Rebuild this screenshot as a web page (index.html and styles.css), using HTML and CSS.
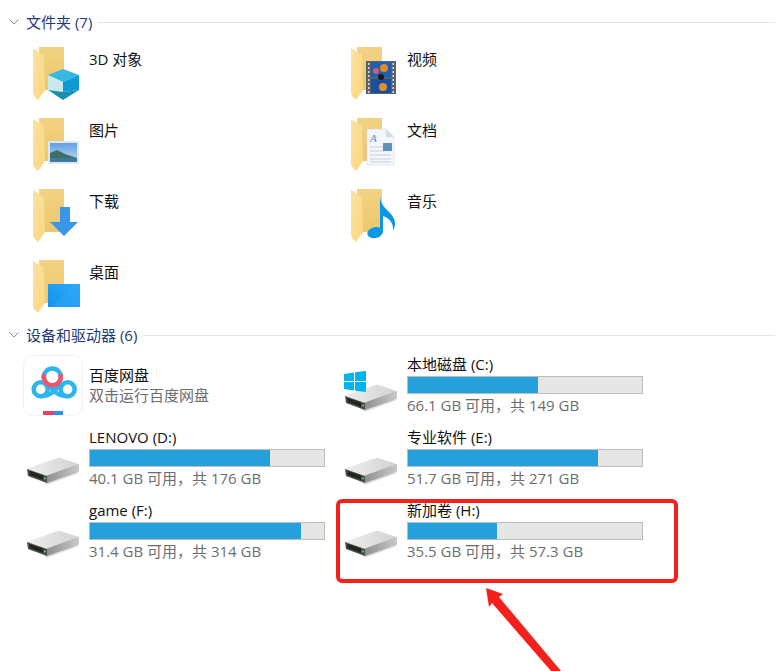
FILE: index.html
```html
<!DOCTYPE html>
<html lang="zh-CN">
<head>
<meta charset="utf-8">
<title>此电脑</title>
<link rel="stylesheet" href="styles.css">
</head>
<body>
<svg class="defs" width="0" height="0" aria-hidden="true">
  <defs>
    <linearGradient id="fb" x1="0" y1="0" x2="0" y2="1"><stop offset="0" stop-color="#f2d283"/><stop offset="1" stop-color="#ebc76c"/></linearGradient>
    <linearGradient id="ff" x1="0" y1="0" x2="1" y2="1"><stop offset="0" stop-color="#fce2a0"/><stop offset="1" stop-color="#fad680"/></linearGradient>
    <linearGradient id="dt" x1="0" y1="0" x2="1" y2="0"><stop offset="0" stop-color="#eeeeee"/><stop offset="1" stop-color="#d2d2d2"/></linearGradient>
    <linearGradient id="ds" x1="0" y1="0" x2="1" y2="0"><stop offset="0" stop-color="#8f8f8f"/><stop offset="1" stop-color="#c8c8c8"/></linearGradient>
    <linearGradient id="sky" x1="0" y1="0" x2="0" y2="1"><stop offset="0" stop-color="#5f9fe6"/><stop offset="1" stop-color="#c5dcec"/></linearGradient>
    <linearGradient id="desk" x1="0" y1="1" x2="1" y2="0"><stop offset="0" stop-color="#1592ec"/><stop offset="1" stop-color="#2aa8f8"/></linearGradient>
    <symbol id="folder" viewBox="0 0 48 56">
      <polygon points="6,1 31,1 31,44 8,44" fill="url(#fb)"/>
      <polygon points="0,2 11,9 12,44 5,54 1,50 0,47" fill="url(#ff)"/>
    </symbol>
    <symbol id="drive" viewBox="0 0 66 66">
      <polygon points="6,44 24,58 56,46 50,44" fill="#000" opacity=".12"/>
      <polygon points="4.500,42 36,31 55.500,37.500 24,49" fill="url(#dt)" stroke="url(#dt)" stroke-linejoin="round"/>
      <polygon points="24,49 55.500,37.500 55.500,44.500 24,55.500" fill="url(#ds)" stroke="url(#ds)" stroke-linejoin="round"/>
      <polygon points="4,42 24,49 24,56 5,49" fill="#4a4c4a"/>
      <polygon points="6.500,44 20,48.500 20,53 6.500,48" fill="#232523"/>
      <circle cx="22" cy="51.500" r="1.100" fill="#4fd072"/>
    </symbol>
  </defs>
</svg>

<section class="group">
  <header class="group-head">
    <svg class="chevron" width="10" height="6" viewBox="0 0 10 6"><path d="M0.5 0.5 5 5 9.5 0.5" fill="none" stroke="#8a8a8a"/></svg>
    <h2 class="group-title">文件夹 (7)</h2>
    <span class="group-rule"></span>
  </header>
  <div class="folders">
    <div class="tile">
      <svg class="folder-icon" viewBox="0 0 48 56">
        <use href="#folder" width="48" height="56"/>
        <polygon points="30,23 46,29 30,36 15,29" fill="#35b8e2"/>
        <polygon points="15,29 30,36 30,46 15,44" fill="#c7e9ee"/>
        <polygon points="30,36 46,29 46,44 30,46" fill="#0e9ad4"/>
        <polygon points="15,44 30,46 46,44 30,54" fill="#1a8fae"/>
      </svg>
      <span class="tile-name">3D 对象</span>
    </div>
    <div class="tile">
      <svg class="folder-icon" viewBox="0 0 48 56">
        <use href="#folder" width="48" height="56"/>
        <rect x="15" y="15" width="30" height="33" fill="#59626b"/>
        <rect x="20" y="16" width="20" height="15" fill="#1d5fb0"/>
        <rect x="20" y="33" width="20" height="14" fill="#1b4f9e"/>
        <circle cx="33" cy="22" r="4" fill="#e08a2c"/>
        <circle cx="25" cy="25" r="3" fill="#d85a7a"/>
        <circle cx="32" cy="41" r="4" fill="#e0902a"/>
        <circle cx="30" cy="31" r="3" fill="#1a1a1a"/>
        <path d="M17 18h1.500M17 22h1.500M17 26h1.500M17 30h1.500M17 34h1.500M17 38h1.500M17 42h1.500M17 46h1.500M41.500 18H43M41.500 22H43M41.500 26H43M41.500 30H43M41.500 34H43M41.500 38H43M41.500 42H43M41.500 46H43" stroke="#d8dde2" stroke-width="2"/>
      </svg>
      <span class="tile-name">视频</span>
    </div>
    <div class="tile">
      <svg class="folder-icon" viewBox="0 0 48 56">
        <use href="#folder" width="48" height="56"/>
        <rect x="15" y="24" width="31" height="23" fill="#dfe8f0"/>
        <rect x="17" y="26" width="27" height="19" fill="url(#sky)"/>
        <path d="M17 36 24 33 32 37 44 41V45H17Z" fill="#3f6f5f"/>
        <rect x="17" y="41" width="27" height="4" fill="#3f78a0"/>
      </svg>
      <span class="tile-name">图片</span>
    </div>
    <div class="tile">
      <svg class="folder-icon" viewBox="0 0 48 56">
        <use href="#folder" width="48" height="56"/>
        <polygon points="16,12 35,12 43,20 43,48 16,48" fill="#f4f6f9" stroke="#d4d9df" stroke-width=".6"/>
        <polygon points="35,12 43,20 35,20" fill="#d5dce4"/>
        <path d="M19 30H34M19 34H34M19 38H40M19 42H40M19 45H40" stroke="#c3d2e2"/>
        <rect x="32" y="26" width="9" height="8" fill="#5f93bb"/>
        <text class="doc-a" x="19" y="25">A</text>
      </svg>
      <span class="tile-name">文档</span>
    </div>
    <div class="tile">
      <svg class="folder-icon" viewBox="0 0 48 56">
        <use href="#folder" width="48" height="56"/>
        <polygon points="27,19 37,19 37,34 45,34 31,48 17,34 27,34" fill="#3a96e8"/>
      </svg>
      <span class="tile-name">下载</span>
    </div>
    <div class="tile">
      <svg class="folder-icon" viewBox="0 0 48 56">
        <use href="#folder" width="48" height="56"/>
        <path d="M29 9C30 16 33 19 38 24 44 30 46 35 42 43 43 35 38 30 32 28V44C31 48 26 51 21 50 16 49 15 45 18 42 21 39 26 38 29 40Z" fill="#0a97e8"/>
      </svg>
      <span class="tile-name">音乐</span>
    </div>
    <div class="tile">
      <svg class="folder-icon" viewBox="0 0 48 56">
        <use href="#folder" width="48" height="56"/>
        <rect x="15" y="25" width="32" height="23" fill="url(#desk)"/>
        <polygon points="19,48 40,25 47,25 47,48" fill="#2fa6f5" opacity=".55"/>
      </svg>
      <span class="tile-name">桌面</span>
    </div>
  </div>
</section>

<section class="group">
  <header class="group-head">
    <svg class="chevron" width="10" height="6" viewBox="0 0 10 6"><path d="M0.5 0.5 5 5 9.5 0.5" fill="none" stroke="#8a8a8a"/></svg>
    <h2 class="group-title">设备和驱动器 (6)</h2>
    <span class="group-rule"></span>
  </header>
  <div class="drives">
    <div class="tile">
      <svg class="drive-icon" viewBox="0 0 66 66">
        <rect x="0.500" y="1.500" width="59" height="59.500" rx="9" fill="#fff" stroke="#f0f0f0"/>
        <path d="M17.700 42.300C24 42.300 27 41 31 37 34.500 33.500 36 32 37.500 29.500" fill="none" stroke="#2cb5ee" stroke-width="4.500"/>
        <path d="M44.700 42.300C38.500 42.300 35 41 31 37 27.500 33.500 26 32 23 29" fill="none" stroke="#2cb5ee" stroke-width="4.500"/>
        <circle cx="17.700" cy="35.300" r="7" fill="none" stroke="#2cb5ee" stroke-width="4.500"/>
        <circle cx="44.700" cy="35.300" r="7" fill="none" stroke="#2cb5ee" stroke-width="4.500"/>
        <circle cx="29.300" cy="23" r="8.500" fill="none" stroke="#2cb5ee" stroke-width="4.500"/>
        <path d="M21.300 20A8.500 8.500 0 1 0 37.300 20" fill="none" stroke="#ee5570" stroke-width="4.500"/>
        <rect x="20" y="57" width="11" height="4" fill="#ee3f62"/>
        <rect x="31" y="57" width="9" height="4" fill="#2f8fee"/>
      </svg>
      <div class="tile-text app-text">
        <span class="tile-name">百度网盘</span>
        <span class="tile-note">双击运行百度网盘</span>
      </div>
    </div>
    <div class="tile">
      <svg class="drive-icon" viewBox="0 0 66 66">
        <use href="#drive" width="66" height="66"/>
        <polygon points="3,20 13,18.500 13,27 3,27" fill="#00b4ee"/>
        <polygon points="14,18.300 25,17 25,27 14,27" fill="#00b4ee"/>
        <polygon points="3,28 13,28 13,36.500 3,35" fill="#00b4ee"/>
        <polygon points="14,28 25,28 25,38 14,36.700" fill="#00b4ee"/>
      </svg>
      <div class="tile-text">
        <span class="tile-name">本地磁盘 (C:)</span>
        <div class="bar"><div class="bar-fill" style="width:55.6%"></div></div>
        <span class="tile-note">66.1 GB 可用，共 149 GB</span>
      </div>
    </div>
    <div class="tile">
      <svg class="drive-icon" viewBox="0 0 66 66"><use href="#drive" width="66" height="66"/></svg>
      <div class="tile-text">
        <span class="tile-name">LENOVO (D:)</span>
        <div class="bar"><div class="bar-fill" style="width:77%"></div></div>
        <span class="tile-note">40.1 GB 可用，共 176 GB</span>
      </div>
    </div>
    <div class="tile">
      <svg class="drive-icon" viewBox="0 0 66 66"><use href="#drive" width="66" height="66"/></svg>
      <div class="tile-text">
        <span class="tile-name">专业软件 (E:)</span>
        <div class="bar"><div class="bar-fill" style="width:81%"></div></div>
        <span class="tile-note">51.7 GB 可用，共 271 GB</span>
      </div>
    </div>
    <div class="tile">
      <svg class="drive-icon" viewBox="0 0 66 66"><use href="#drive" width="66" height="66"/></svg>
      <div class="tile-text">
        <span class="tile-name">game (F:)</span>
        <div class="bar"><div class="bar-fill" style="width:90%"></div></div>
        <span class="tile-note">31.4 GB 可用，共 314 GB</span>
      </div>
    </div>
    <div class="tile">
      <svg class="drive-icon" viewBox="0 0 66 66"><use href="#drive" width="66" height="66"/></svg>
      <div class="tile-text">
        <span class="tile-name">新加卷 (H:)</span>
        <div class="bar"><div class="bar-fill" style="width:38%"></div></div>
        <span class="tile-note">35.5 GB 可用，共 57.3 GB</span>
      </div>
    </div>
  </div>
</section>

<div class="callout-box"></div>
<svg class="callout-arrow" width="100" height="90" viewBox="0 0 100 90">
  <polygon points="6,7 23,13 19,16 81,90 71,90 12,22 9,26" fill="#f4201c"/>
</svg>
</body>
</html>
```

FILE: styles.css
```css
html, body {
  margin: 0;
  padding: 0;
  background: #fff;
}

body {
  position: relative;
  width: 784px;
  height: 671px;
  overflow: hidden;
  padding-top: 12px;
  box-sizing: border-box;
  font-family: "Open Sans", "Noto Sans CJK SC", sans-serif;
  font-size: 15px;
  line-height: 20px;
  color: #111;
}

.defs {
  position: absolute;
}

.group-head {
  display: flex;
  align-items: center;
  height: 20px;
  width: 775px;
  padding-left: 9px;
  box-sizing: border-box;
}

.chevron {
  flex: none;
  margin-right: 7px;
}

.group-title {
  margin: 0 6px 0 0;
  font-size: 15px;
  font-weight: 400;
  line-height: 20px;
  color: #1e3a78;
  white-space: nowrap;
}

.group-rule {
  flex: 1;
  height: 1px;
  background: #e2e5ec;
}

.folders,
.drives {
  display: grid;
  grid-template-columns: 318px 318px;
}

.folders {
  grid-auto-rows: 66px;
  row-gap: 5px;
  padding: 14px 0 0 33px;
}

.drives {
  grid-auto-rows: 66px;
  row-gap: 7px;
  padding: 9px 0 0 23px;
}

.tile {
  display: flex;
  align-items: flex-start;
}

.folder-icon {
  flex: none;
  width: 48px;
  height: 56px;
  margin-right: 8px;
}

.folders .tile-name {
  margin-top: 3px;
}

.drive-icon {
  flex: none;
  width: 66px;
  height: 66px;
}

.tile-text {
  display: flex;
  flex-direction: column;
  width: 236px;
}

.app-text {
  padding-top: 11px;
}

.tile-name {
  display: block;
  color: #111;
  white-space: nowrap;
}

.tile-note {
  display: block;
  color: #6d6d6d;
  white-space: nowrap;
}

.bar {
  height: 18px;
  margin: 2px 0 1px;
  box-sizing: border-box;
  border: 1px solid #bcbcbc;
  background: #e6e6e6;
}

.bar-fill {
  height: 100%;
  background: #26a0da;
}

.doc-a {
  font-family: "Liberation Serif", serif;
  font-style: italic;
  font-size: 11px;
  fill: #5a93c8;
}

.callout-box {
  position: absolute;
  left: 336px;
  top: 499px;
  width: 342px;
  height: 84px;
  box-sizing: border-box;
  border: 4px solid #f4201c;
  border-radius: 6px;
}

.callout-arrow {
  position: absolute;
  left: 480px;
  top: 581px;
}
```
